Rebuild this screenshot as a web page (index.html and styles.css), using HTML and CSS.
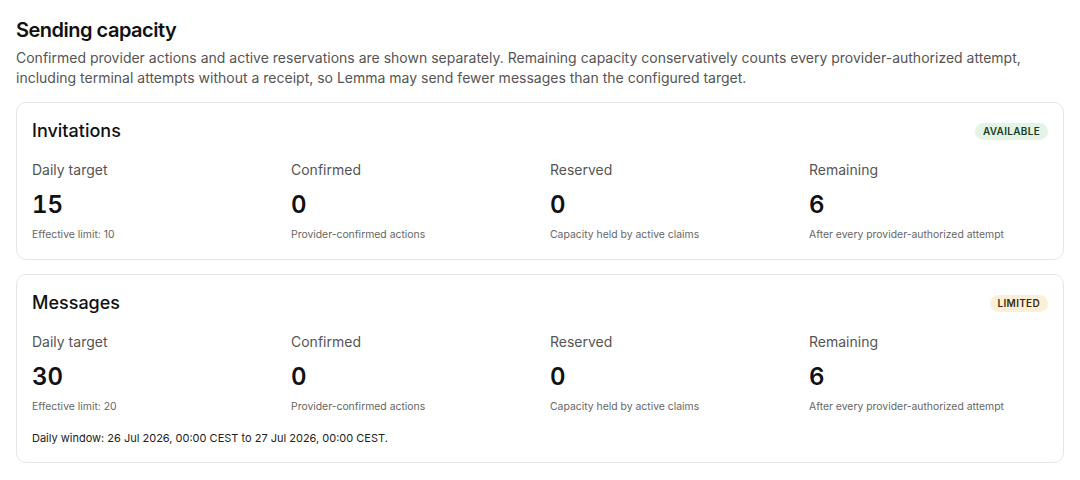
FILE: index.html
```html
<!DOCTYPE html>
<html lang="en">
<head>
<meta charset="utf-8">
<title>Sending capacity</title>
<link rel="stylesheet" href="styles.css">
</head>
<body>
<main class="page">
  <h1 class="title">Sending capacity</h1>
  <p class="desc">Confirmed provider actions and active reservations are shown separately. Remaining capacity conservatively counts every provider-authorized attempt, including terminal attempts without a receipt, so Lemma may send fewer messages than the configured target.</p>

  <section class="card">
    <div class="card-head">
      <h2 class="card-title">Invitations</h2>
      <span class="badge badge-ok">AVAILABLE</span>
    </div>
    <div class="stats">
      <div class="stat">
        <div class="stat-label">Daily target</div>
        <div class="stat-value">15</div>
        <div class="stat-note">Effective limit: 10</div>
      </div>
      <div class="stat">
        <div class="stat-label">Confirmed</div>
        <div class="stat-value">0</div>
        <div class="stat-note">Provider-confirmed actions</div>
      </div>
      <div class="stat">
        <div class="stat-label">Reserved</div>
        <div class="stat-value">0</div>
        <div class="stat-note">Capacity held by active claims</div>
      </div>
      <div class="stat">
        <div class="stat-label">Remaining</div>
        <div class="stat-value">6</div>
        <div class="stat-note">After every provider-authorized attempt</div>
      </div>
    </div>
  </section>

  <section class="card">
    <div class="card-head">
      <h2 class="card-title">Messages</h2>
      <span class="badge badge-warn">LIMITED</span>
    </div>
    <div class="stats">
      <div class="stat">
        <div class="stat-label">Daily target</div>
        <div class="stat-value">30</div>
        <div class="stat-note">Effective limit: 20</div>
      </div>
      <div class="stat">
        <div class="stat-label">Confirmed</div>
        <div class="stat-value">0</div>
        <div class="stat-note">Provider-confirmed actions</div>
      </div>
      <div class="stat">
        <div class="stat-label">Reserved</div>
        <div class="stat-value">0</div>
        <div class="stat-note">Capacity held by active claims</div>
      </div>
      <div class="stat">
        <div class="stat-label">Remaining</div>
        <div class="stat-value">6</div>
        <div class="stat-note">After every provider-authorized attempt</div>
      </div>
    </div>
    <p class="window">Daily window: 26 Jul 2026, 00:00 CEST to 27 Jul 2026, 00:00 CEST.</p>
  </section>
</main>
</body>
</html>
```

FILE: styles.css
```css
* { box-sizing: border-box; }

html, body {
  margin: 0;
  padding: 0;
  background: #ffffff;
}

body {
  font-family: Inter, "Liberation Sans", Arial, sans-serif;
  color: #111111;
}

.page {
  padding: 16px;
  display: flex;
  flex-direction: column;
}

.title {
  margin: 0;
  font-size: 20px;
  line-height: 28px;
  font-weight: 600;
  letter-spacing: -0.5px;
  color: #111111;
}

.desc {
  margin: 4px 0 15px;
  font-size: 14px;
  line-height: 19.5px;
  color: #555555;
}

.card {
  border: 1px solid #e6e6e6;
  border-radius: 10px;
  padding: 16px 15px;
  margin-bottom: 14px;
  background: #fff;
}

.card-head {
  display: flex;
  align-items: center;
  justify-content: space-between;
  margin-bottom: 17px;
}

.card-title {
  margin: 0;
  font-size: 18px;
  line-height: 24px;
  font-weight: 500;
  color: #111111;
}

.badge {
  font-size: 10px;
  line-height: 17px;
  font-weight: 600;
  letter-spacing: 0.3px;
  padding: 0 8px;
  border-radius: 9px;
}

.badge-ok {
  background: #e3f3e5;
  color: #1d3b24;
}

.badge-warn {
  background: #fbefd8;
  color: #3b2c10;
}

.stats {
  display: grid;
  grid-template-columns: repeat(4, 1fr);
  column-gap: 20px;
}

.stat-label {
  font-size: 14px;
  line-height: 20px;
  color: #555555;
}

.stat-value {
  margin-top: 9px;
  font-size: 24px;
  line-height: 32px;
  font-weight: 600;
  font-variant-numeric: tabular-nums;
  color: #111111;
}

.stat-note {
  margin-top: 6px;
  font-size: 10.4px;
  line-height: 16px;
  color: #666666;
}

.window {
  margin: 15px 0 0;
  font-size: 11px;
  line-height: 16px;
  color: #222222;
}
```
